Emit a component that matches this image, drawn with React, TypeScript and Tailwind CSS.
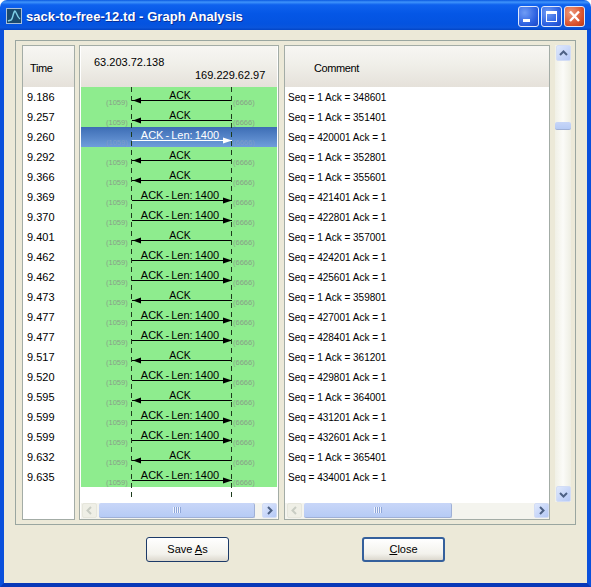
type Row = { time: string; right: boolean; comment: string; selected?: boolean };

const rows: Row[] = [
  { time: "9.186", right: false, comment: "Seq = 1 Ack = 348601" },
  { time: "9.257", right: false, comment: "Seq = 1 Ack = 351401" },
  { time: "9.260", right: true, comment: "Seq = 420001 Ack = 1", selected: true },
  { time: "9.292", right: false, comment: "Seq = 1 Ack = 352801" },
  { time: "9.366", right: false, comment: "Seq = 1 Ack = 355601" },
  { time: "9.369", right: true, comment: "Seq = 421401 Ack = 1" },
  { time: "9.370", right: true, comment: "Seq = 422801 Ack = 1" },
  { time: "9.401", right: false, comment: "Seq = 1 Ack = 357001" },
  { time: "9.462", right: true, comment: "Seq = 424201 Ack = 1" },
  { time: "9.462", right: true, comment: "Seq = 425601 Ack = 1" },
  { time: "9.473", right: false, comment: "Seq = 1 Ack = 359801" },
  { time: "9.477", right: true, comment: "Seq = 427001 Ack = 1" },
  { time: "9.477", right: true, comment: "Seq = 428401 Ack = 1" },
  { time: "9.517", right: false, comment: "Seq = 1 Ack = 361201" },
  { time: "9.520", right: true, comment: "Seq = 429801 Ack = 1" },
  { time: "9.595", right: false, comment: "Seq = 1 Ack = 364001" },
  { time: "9.599", right: true, comment: "Seq = 431201 Ack = 1" },
  { time: "9.599", right: true, comment: "Seq = 432601 Ack = 1" },
  { time: "9.632", right: false, comment: "Seq = 1 Ack = 365401" },
  { time: "9.635", right: true, comment: "Seq = 434001 Ack = 1" },
];

const headerBg = "bg-[linear-gradient(#f7f6f3,#f0efe9_45%,#e5e1da)]";
const scrollBtn =
  "flex items-center justify-center rounded-[2px] border border-[#d3ddf5] bg-[linear-gradient(135deg,#dfe8fc,#b4c8f6)]";

function Chevron({ dir, muted }: { dir: "up" | "down" | "left" | "right"; muted?: boolean }) {
  const d = {
    up: "M3 8 L6.5 4.5 L10 8",
    down: "M3 5 L6.5 8.5 L10 5",
    left: "M8 3 L4.5 6.5 L8 10",
    right: "M5 3 L8.5 6.5 L5 10",
  }[dir];
  return (
    <svg width="13" height="13" viewBox="0 0 13 13">
      <path d={d} fill="none" stroke={muted ? "#c9cdc4" : "#4d6185"} strokeWidth="2" />
    </svg>
  );
}

function HScroll({ thumb, gapLeft }: { thumb: number; gapLeft: number }) {
  return (
    <div className="flex h-[16px] items-stretch bg-[#f4f4ee]" style={{ paddingLeft: gapLeft }}>
      <div className="flex h-[15px] w-[15px] items-center justify-center rounded-[2px] border border-[#e6e6dc] bg-[#efefe6]">
        <Chevron dir="left" muted />
      </div>
      <div
        className="ml-[2px] flex h-[15px] items-center justify-center rounded-[2px] border-r border-b border-[#9fb0d6] bg-[linear-gradient(#c8d6f8,#b6cbf5)]"
        style={{ width: thumb }}
      >
        <span className="h-[6px] w-[8px] bg-[repeating-linear-gradient(90deg,#eef3ff_0,#eef3ff_1px,#8ea6d8_1px,#8ea6d8_2px)]" />
      </div>
      <div className="flex-1" />
      <div className={`${scrollBtn} h-[15px] w-[15px]`}>
        <Chevron dir="right" />
      </div>
    </div>
  );
}

function GraphRow({ row }: { row: Row }) {
  const ink = row.selected ? "#ffffff" : "#000000";
  const port = row.selected ? "text-[#7d9bc8]" : "text-[#88a088]";
  return (
    <div
      className={`relative h-[20px] ${
        row.selected ? "bg-[linear-gradient(#3d6db5,#6f9ddb)] text-white" : "bg-[#8eec8e] text-black"
      }`}
    >
      <span
        className={`absolute left-0 right-0 top-[1px] pl-[2px] text-center leading-[14px] ${
          row.right ? "text-[11px] [word-spacing:-1px]" : "text-[10.5px]"
        }`}
      >
        {row.right ? "ACK - Len: 1400" : "ACK"}
      </span>
      <svg className="absolute left-0 top-0" width="196" height="20">
        <line x1="51" y1="13.5" x2="151" y2="13.5" stroke={ink} strokeWidth="1" />
        {row.right ? (
          <path d="M142 10.5 L151 13.5 L142 16.5 Z" fill={ink} />
        ) : (
          <path d="M60 10.5 L52 13.5 L60 16.5 Z" fill={ink} />
        )}
      </svg>
      <span className={`absolute left-[25px] top-[11px] text-[7.5px] leading-[10px] ${port}`}>(1059)</span>
      <span className={`absolute left-[152px] top-[11px] text-[7.5px] leading-[10px] ${port}`}>(6666)</span>
    </div>
  );
}

function TitleButton({ kind }: { kind: "min" | "max" | "close" }) {
  const bg =
    kind === "close"
      ? "bg-[radial-gradient(circle_at_30%_30%,#ee9a7c,#d9512c_65%,#b83a18)]"
      : "bg-[radial-gradient(circle_at_30%_30%,#6f9cf5,#2a5fe0_65%,#1c46c4)]";
  return (
    <div className={`h-[21px] w-[21px] rounded-[3px] border border-[#dfe8fb] ${bg}`}>
      <svg width="19" height="19" viewBox="0 0 19 19">
        {kind === "min" && <rect x="4" y="12" width="7" height="3" fill="#fff" />}
        {kind === "max" && (
          <g fill="none" stroke="#fff">
            <rect x="4.5" y="4.5" width="10" height="10" />
            <line x1="4" y1="6" x2="15" y2="6" strokeWidth="2" />
          </g>
        )}
        {kind === "close" && (
          <path d="M5 4.5 L14 14 M14 4.5 L5 14" stroke="#fff" strokeWidth="2.4" />
        )}
      </svg>
    </div>
  );
}

export default function App() {
  return (
    <div className="flex h-[587px] w-[591px] flex-col overflow-hidden bg-white font-['Liberation_Sans',Arial,sans-serif] text-[11px] text-black">
      {/* title bar */}
      <div className="flex h-[30px] shrink-0 items-center rounded-t-[7px] bg-[linear-gradient(#0a58e0,#3f94fb_7%,#0f62ee_16%,#0557e6_45%,#0453e0_80%,#0a55dc_92%,#0344c4)] pl-[6px] pr-[6px] pt-[2px]">
        <svg width="16" height="16" viewBox="0 0 16 16" className="shrink-0">
          <rect x="0.5" y="0.5" width="15" height="15" fill="#1a4a6e" stroke="#a9bfd8" />
          <path d="M2 13 L5 12 C7 11 7 4 9 3 C10 3 11 9 14 11" fill="none" stroke="#7fd0e8" strokeWidth="1.4" />
        </svg>
        <span className="ml-[4px] mt-[1px] text-[13px] font-bold tracking-[0.06px] text-white [text-shadow:1px_1px_#0a2f96]">
          sack-to-free-12.td - Graph Analysis
        </span>
        <div className="ml-auto flex gap-[2px]">
          <TitleButton kind="min" />
          <TitleButton kind="max" />
          <TitleButton kind="close" />
        </div>
      </div>

      {/* client area */}
      <div className="flex-1 border-x-4 border-b-4 border-x-[#0a50dc] border-b-[#0838b8] bg-[#ece9d8] pl-[11px] pt-[10px]">
        <div className="flex h-[485px] w-[561px] border border-[#9aa6a0] pl-[6px] pt-[4px]">
          {/* time column */}
          <div className="h-[475px] w-[53px] border border-[#a3aca6] bg-white">
            <div className={`flex h-[41px] items-center pl-[7px] pt-[4px] tracking-[-0.4px] ${headerBg}`}>Time</div>
            {rows.map((r, i) => (
              <div key={i} className="flex h-[20px] items-center pl-[4px] pt-[1px]">
                {r.time}
              </div>
            ))}
          </div>

          {/* graph column */}
          <div className="ml-[4px] flex h-[475px] w-[200px] flex-col border border-[#a3aca6] bg-white pl-[1px] pr-[1px]">
            <div className={`relative h-[41px] shrink-0 ${headerBg}`}>
              <span className="absolute left-[13px] top-[8px]">63.203.72.138</span>
              <span className="absolute left-[114px] top-[21px]">169.229.62.97</span>
            </div>
            <div className="relative flex-1">
              {rows.map((r, i) => (
                <GraphRow key={i} row={r} />
              ))}
              <svg className="absolute left-0 top-0" width="196" height="414">
                <line x1="50.5" y1="0" x2="50.5" y2="414" stroke="#1c3a1c" strokeDasharray="5 4" />
                <line x1="150.5" y1="0" x2="150.5" y2="414" stroke="#1c3a1c" strokeDasharray="5 4" />
              </svg>
            </div>
            <HScroll thumb={156} gapLeft={1} />
          </div>

          {/* comment column */}
          <div className="ml-[5px] flex h-[475px] w-[266px] flex-col border border-[#a3aca6] bg-white">
            <div className={`flex h-[41px] shrink-0 items-center pl-[29px] pt-[4px] tracking-[-0.4px] ${headerBg}`}>Comment</div>
            <div className="flex-1">
              {rows.map((r, i) => (
                <div key={i} className="flex h-[20px] items-center pl-[3px] text-[10px]">
                  {r.comment}
                </div>
              ))}
            </div>
            <HScroll thumb={148} gapLeft={2} />
          </div>

          {/* vertical scrollbar */}
          <div className="ml-[5px] flex h-[457px] w-[16px] flex-col items-center bg-[linear-gradient(90deg,#f0f0e6,#fbfbf8_50%,#eeeee3)]">
            <div className={`${scrollBtn} h-[16px] w-[15px] shrink-0`}>
              <Chevron dir="up" />
            </div>
            <div className="mt-[61px] h-[8px] w-[16px] rounded-[2px] border-b border-[#9fb0d6] bg-[linear-gradient(#c8d6f8,#b6cbf5)]" />
            <div className="flex-1" />
            <div className={`${scrollBtn} h-[16px] w-[15px] shrink-0`}>
              <Chevron dir="down" />
            </div>
          </div>
        </div>

        {/* actions */}
        <div className="mt-[12px] flex pl-[131px]">
          <button className="h-[25px] w-[83px] rounded-[3px] border border-[#1c3a68] bg-[linear-gradient(#ffffff,#f3f2ec_70%,#dcd8ce)]">
            Save <span className="underline">A</span>s
          </button>
          <button className="ml-[133px] h-[25px] w-[83px] rounded-[3px] border-2 border-[#35609c] bg-[linear-gradient(#ffffff,#f3f2ec_70%,#dcd8ce)]">
            <span className="underline">C</span>lose
          </button>
        </div>
      </div>
    </div>
  );
}
